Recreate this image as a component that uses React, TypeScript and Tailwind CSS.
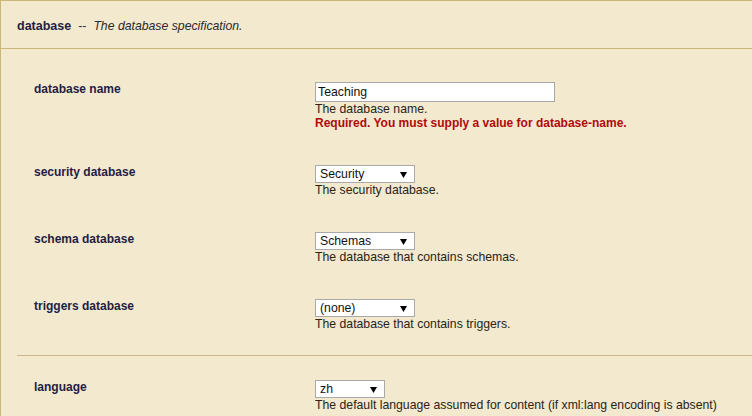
import type { ReactNode } from "react"

type Field = {
  label: string
  kind: "text" | "select"
  value: string
  width: string
  help: string
  error?: string
}

const mainFields: Field[] = [
  {
    label: "database name",
    kind: "text",
    value: "Teaching",
    width: "w-[240px]",
    help: "The database name.",
    error: "Required. You must supply a value for database-name.",
  },
  { label: "security database", kind: "select", value: "Security", width: "w-[100px]", help: "The security database." },
  { label: "schema database", kind: "select", value: "Schemas", width: "w-[100px]", help: "The database that contains schemas." },
  { label: "triggers database", kind: "select", value: "(none)", width: "w-[100px]", help: "The database that contains triggers." },
]

const extraFields: Field[] = [
  {
    label: "language",
    kind: "select",
    value: "zh",
    width: "w-[70px]",
    help: "The default language assumed for content (if xml:lang encoding is absent)",
  },
]

export default function App() {
  return (
    <div className="min-h-screen bg-[#f2e9ce] font-['Liberation_Sans',Arial,sans-serif] text-[12.25px] leading-[14px] text-[#222]">
      <div className="border-l border-[#cbb777]">
        <Header />
        <div className="pt-[33px] pl-[16px] pb-6">
          <FieldGroup fields={mainFields} />
          <div className="my-6 border-t border-[#cbb98a]" />
          <FieldGroup fields={extraFields} />
        </div>
      </div>
    </div>
  )
}

/* --- pieces --- */

function Header() {
  return (
    <div className="h-[49px] border-y border-[#cbb777] pl-[16px] pt-[3px] flex items-center">
      <span className="font-bold text-[12.5px] text-[#1f1d45]">database</span>
      <span className="mx-[7px] text-[#333]">--</span>
      <span className="italic text-[#2a2a2a]">The database specification.</span>
    </div>
  )
}

function FieldGroup({ fields }: { fields: Field[] }) {
  return (
    <div className="flex flex-col gap-[35px]">
      {fields.map(f => (
        <Row key={f.label} label={f.label}>
          {f.kind === "text" ? (
            <TextBox value={f.value} width={f.width} />
          ) : (
            <SelectBox value={f.value} width={f.width} />
          )}
          <div className="text-[#2b2218]">{f.help}</div>
          {f.error && <div className="font-bold text-[12px] text-[#b00a0a]">{f.error}</div>}
        </Row>
      ))}
    </div>
  )
}

function Row({ label, children }: { label: string; children: ReactNode }) {
  return (
    <div className="grid grid-cols-[298px_1fr]">
      <div className="pl-[17px] font-bold text-[12px] text-[#1f1d45]">{label}</div>
      <div className="flex flex-col items-start">{children}</div>
    </div>
  )
}

function TextBox({ value, width }: { value: string; width: string }) {
  return (
    <div className={`${width} h-[20px] bg-white border border-[#a9a9a9] px-[2px] flex items-center text-[#111]`}>
      {value}
    </div>
  )
}

function SelectBox({ value, width }: { value: string; width: string }) {
  return (
    <div className={`${width} h-[18px] bg-white border border-[#a9a9a9] pl-[4px] pr-[7px] flex items-center justify-between text-[#111]`}>
      <span>{value}</span>
      <svg width="7" height="6" viewBox="0 0 7 6" className="mt-px">
        <path d="M0 0 H7 L3.5 6 Z" fill="#000" />
      </svg>
    </div>
  )
}
